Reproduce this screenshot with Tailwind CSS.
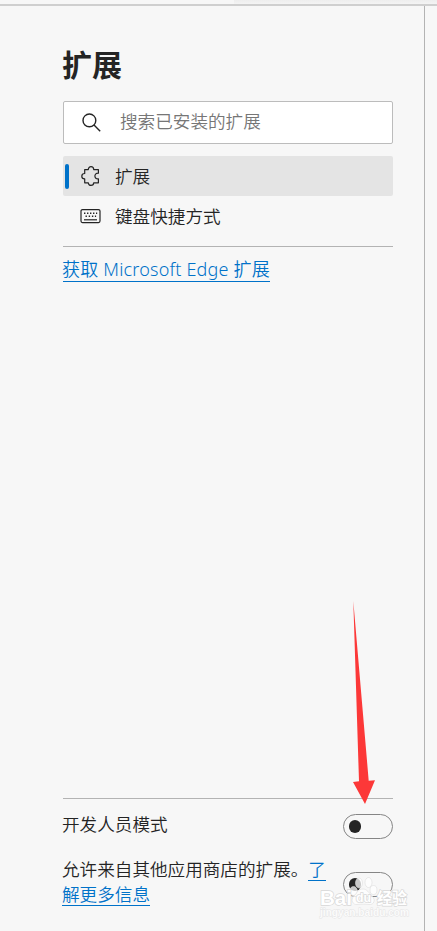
<!DOCTYPE html>
<html lang="zh-CN">
<head>
<meta charset="utf-8">
<title>扩展</title>
<script src="https://cdn.jsdelivr.net/npm/@tailwindcss/browser@4"></script>
</head>
<body class="relative flex h-[931px] w-[437px] flex-col overflow-hidden bg-[#f7f7f7] font-['Noto_Sans','Noto_Sans_CJK_SC',sans-serif] text-[17.6px] font-[350] text-[#242424]">
<header class="flex h-[6px] shrink-0 border-b-2 border-[#cfcfcf]">
  <div class="ml-[234px] flex-1 bg-linear-to-b from-[#eeeeee] to-[#f4f4f4]"></div>
</header>
<div class="flex flex-1">
<aside class="flex w-[425px] flex-col border-r border-[#b3b3b3] pr-[31px] pl-[63px]">
  <h1 class="mt-[38px] -ml-px h-[42px] text-[30px] leading-[42px] font-bold">扩展</h1>
  <div class="mt-[15px] flex h-[43px] items-center rounded-[2px] border border-[#bcbcbc] bg-white text-[#767676]">
    <svg class="ml-[18px] h-[20px] w-[20px]" viewBox="0 0 20 20" fill="none" stroke="#242424" stroke-width="1.4"><circle cx="7.4" cy="7.4" r="6.4"/><path d="M12 12 18.2 18.2"/></svg>
    <span class="ml-[18px] pb-[3px] leading-[24px]">搜索已安装的扩展</span>
  </div>
  <nav class="mt-[12px]">
    <a class="flex h-[40px] items-center rounded-[2px] bg-[#e4e4e4]">
      <span class="ml-[2px] h-[25px] w-[4px] rounded-[2px] bg-[#0072c9]"></span>
      <svg class="ml-[12px] h-[20px] w-[20px]" viewBox="0 0 20 20" fill="none" stroke="#242424" stroke-width="1.2" stroke-linejoin="round"><path d="M3.7 3.6H7.3C7.3 1.8 8.5.7 10 .7S12.7 1.8 12.7 3.6H17.4V7.2C15.2 7 13.9 8.3 13.9 10.1S15.2 13.1 17.4 12.9V16.8H12.7C12.7 18.4 11.5 19.4 10 19.4S7.3 18.4 7.3 16.8H3.7V12.9C1.8 12.9.8 11.7.8 10.2S1.8 7.5 3.7 7.5Z"/></svg>
      <span class="ml-[14px] leading-[24px]">扩展</span>
    </a>
    <a class="flex h-[40px] items-center">
      <svg class="ml-[17px] h-[16px] w-[21px]" viewBox="0 0 21 16" fill="none" stroke="#242424" stroke-width="1.2"><rect x="1" y="1.6" width="19" height="13" rx="1.5"/><path d="M4 5.3h1.4M7 5.3h1.4M10 5.3h1.4M13 5.3h1.4M16 5.3h1.2M5.5 8.3h1.4M8.7 8.3h1.4M11.9 8.3h1.4M14.9 8.3h1.2" stroke-width="1.4"/><path d="M4 11.8h13"/></svg>
      <span class="ml-[14px] leading-[24px]">键盘快捷方式</span>
    </a>
  </nav>
  <div class="mt-[10px] h-px bg-[#b3b3b3]"></div>
  <a class="mt-[11px] h-[24px] w-[207px] border-b border-[#0072c9] text-[18px] leading-[23px] tracking-[0.19px] whitespace-nowrap text-[#0072c9]"><span class="-ml-px">获取 Microsoft Edge 扩展</span></a>
  <section class="mt-auto h-[133px] border-t border-[#b3b3b3]">
    <div class="mt-[15px] flex h-[25px] items-center justify-between">
      <span class="-ml-px pb-[6px] leading-[24px]">开发人员模式</span>
      <span class="flex h-[25px] w-[50px] items-center rounded-full border border-[#858585] pl-[5px]"><span class="h-[13px] w-[12px] rounded-full bg-[#242424]"></span></span>
    </div>
    <div class="mt-[18px] flex justify-between">
      <p class="-ml-px w-[268px] leading-[25px] whitespace-nowrap">允许来自其他应用商店的扩展。<a class="inline-block h-[24px] border-b border-[#0072c9] text-[#0072c9]">了</a><br><a class="inline-block h-[24px] border-b border-[#0072c9] text-[#0072c9]">解更多信息</a></p>
      <span class="mt-[15px] flex h-[25px] w-[50px] shrink-0 items-center rounded-full border border-[#858585] pl-[5px]"><span class="h-[13px] w-[12px] rounded-full bg-[#242424]"></span></span>
    </div>
  </section>
</aside>
</div>
<svg class="absolute top-[600px] left-[350px] h-[206px] w-[28px]" viewBox="0 0 28 206" fill="#fc3838"><path d="M3.3 1 18.7 180.7 25 180.3 15 204 3 182 9 181.3Z"/></svg>
<svg class="absolute top-[874px] left-[316px] h-[50px] w-[100px]" viewBox="0 0 100 50" font-family="Liberation Sans, Noto Sans CJK SC, sans-serif">
  <g fill="#fff" fill-opacity=".75" stroke="#dedede" stroke-width=".6"><ellipse cx="43" cy="9" rx="3.5" ry="5"/><ellipse cx="52.5" cy="8.5" rx="3.5" ry="5"/><ellipse cx="37.5" cy="17" rx="3.8" ry="4.5"/><ellipse cx="57.5" cy="16" rx="3.5" ry="4.5"/><path d="M47 15C51 15 53 19 56 22C60 26 58 31 53 30.5C49 30 45 30 41 30.5C37 31 34 26 38 22C41 19 42 15 47 15Z"/></g>
  <g fill="#fff" stroke="#d8d8d8" stroke-width="1.4" paint-order="stroke" font-weight="bold"><text x="4" y="31" font-size="20" textLength="32" lengthAdjust="spacingAndGlyphs">Bai</text><text x="40" y="28" font-size="12" textLength="15" lengthAdjust="spacingAndGlyphs">du</text><text x="61" y="30" font-size="16" textLength="30" lengthAdjust="spacingAndGlyphs">经验</text></g>
  <text x="4" y="42" font-size="11" font-weight="bold" textLength="89" lengthAdjust="spacingAndGlyphs" fill="#fbfbfb" stroke="#e4e4e4" stroke-width="1" paint-order="stroke">jingyan.baidu.com</text>
</svg>
</body>
</html>
